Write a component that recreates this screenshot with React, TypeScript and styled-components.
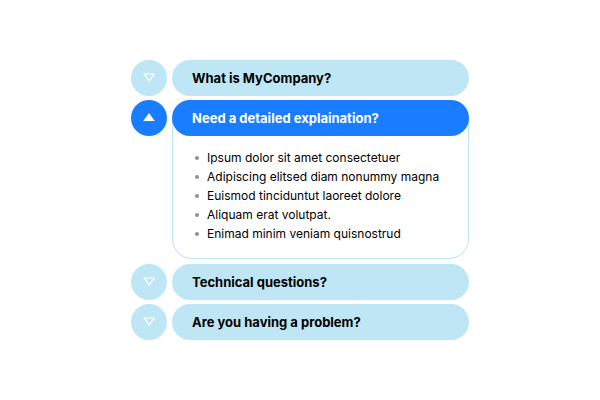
import { useState } from "react";
import styled, { createGlobalStyle } from "styled-components";

const GlobalStyle = createGlobalStyle`
  *, *::before, *::after { box-sizing: border-box; }
  body {
    margin: 0;
    background: #ffffff;
    color: #000000;
    font-family: Inter, "Liberation Sans", sans-serif;
  }
`;

const Page = styled.main`
  min-height: 100vh;
  display: flex;
  align-items: center;
  justify-content: center;
`;

const Accordion = styled.div`
  width: 100%;
  max-width: 338px;
  display: flex;
  flex-direction: column;
  gap: 4px;
`;

const Item = styled.section`
  display: grid;
  grid-template-columns: 36px 1fr;
  column-gap: 5px;
  align-items: start;
`;

const Toggle = styled.button<{ $open: boolean }>`
  width: 36px;
  height: 36px;
  padding: 0;
  border: 0;
  border-radius: 50%;
  display: flex;
  align-items: center;
  justify-content: center;
  cursor: pointer;
  color: #ffffff;
  background: ${(p) => (p.$open ? "#1a7dff" : "#bfe6f5")};
`;

const Card = styled.div`
  min-width: 0;
`;

const Heading = styled.h2`
  margin: 0;
  font-size: 13px;
`;

const Header = styled.button<{ $open: boolean }>`
  position: relative;
  z-index: 1;
  display: block;
  width: 100%;
  height: 36px;
  padding: 0 20px;
  border: 0;
  border-radius: 18px;
  font: inherit;
  font-weight: 700;
  line-height: 20px;
  text-align: left;
  cursor: pointer;
  color: ${(p) => (p.$open ? "#ffffff" : "#000000")};
  background: ${(p) => (p.$open ? "#1a7dff" : "#bfe6f5")};
`;

const Panel = styled.div`
  margin-top: -18px;
  margin-bottom: 1px;
  padding: 30px 20px 15px;
  border: 1px solid #bfe6f5;
  border-top: 0;
  border-radius: 0 0 20px 20px;
`;

const List = styled.ul`
  margin: 0;
  padding: 0;
  list-style: none;
  font-size: 12px;
  line-height: 19px;
`;

const ListItem = styled.li`
  display: flex;
  align-items: center;
  gap: 8px;
  padding-left: 2px;

  &::before {
    content: "";
    width: 4px;
    height: 4px;
    border-radius: 50%;
    background: #929292;
  }
`;

function Arrow({ open }: { open: boolean }) {
  return (
    <svg width="14" height="12" viewBox="0 0 14 12" aria-hidden="true">
      {open ? (
        <path d="M7 1 L12.8 9 H1.2 Z" fill="currentColor" />
      ) : (
        <path d="M2.2 2 H12.2 L7.2 9 Z" fill="none" stroke="currentColor" strokeWidth="1.2" />
      )}
    </svg>
  );
}

const entries: { title: string; points: string[] }[] = [
  { title: "What is MyCompany?", points: [] },
  {
    title: "Need a detailed explaination?",
    points: [
      "Ipsum dolor sit amet consectetuer",
      "Adipiscing elitsed diam nonummy magna",
      "Euismod tinciduntut laoreet dolore",
      "Aliquam erat volutpat.",
      "Enimad minim veniam quisnostrud",
    ],
  },
  { title: "Technical questions?", points: [] },
  { title: "Are you having a problem?", points: [] },
];

export default function App() {
  const [active, setActive] = useState(1);

  return (
    <>
      <GlobalStyle />
      <Page>
        <Accordion>
          {entries.map((entry, index) => {
            const open = index === active;
            const toggle = () => setActive(open ? -1 : index);
            return (
              <Item key={entry.title}>
                <Toggle type="button" $open={open} aria-label={entry.title} aria-expanded={open} onClick={toggle}>
                  <Arrow open={open} />
                </Toggle>
                <Card>
                  <Heading>
                    <Header type="button" $open={open} aria-expanded={open} onClick={toggle}>
                      {entry.title}
                    </Header>
                  </Heading>
                  {open && entry.points.length > 0 && (
                    <Panel>
                      <List>
                        {entry.points.map((point) => (
                          <ListItem key={point}>{point}</ListItem>
                        ))}
                      </List>
                    </Panel>
                  )}
                </Card>
              </Item>
            );
          })}
        </Accordion>
      </Page>
    </>
  );
}
